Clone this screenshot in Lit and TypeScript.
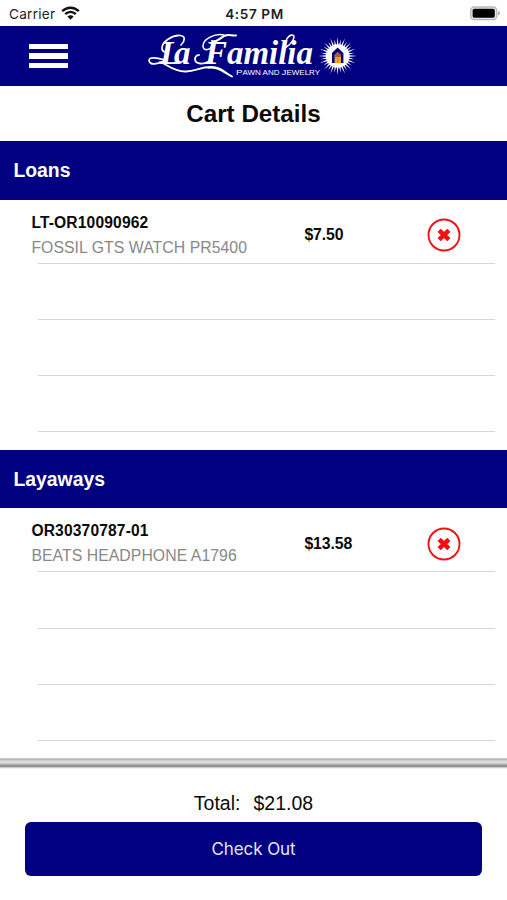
import { LitElement, html, css, svg } from "lit";
import { customElement, property } from "lit/decorators.js";

interface CartItem {
  ticket: string;
  description: string;
  price: string;
}

const rays = Array.from({ length: 32 }, (_, i) => {
  const a = (i * Math.PI) / 16;
  const r = i % 2 ? 17 : 19.2;
  const w = 0.09;
  const pt = (rad: number, ang: number) =>
    `${(189.6 + rad * Math.cos(ang)).toFixed(2)} ${(30 + rad * Math.sin(ang)).toFixed(2)}`;
  return `M${pt(10, a - w)}L${pt(r, a)}L${pt(10, a + w)}Z`;
}).join("");

@customElement("brand-logo")
export class BrandLogo extends LitElement {
  static styles = css`
    :host { display: block; width: 214px; height: 60px; }
    svg { display: block; }
    .script { font: italic bold 33px "Liberation Serif", serif; fill: #fff; }
    .tag { font: 6.5px "Liberation Sans", sans-serif; fill: #fff; }
    .tag-cap { font-size: 8px; }
    .swash { fill: none; stroke: #fff; stroke-linecap: round; stroke-linejoin: round; }
  `;
  render() {
    return html`<svg width="214" height="60" viewBox="0 0 214 60">
      ${svg`
        <text class="script" x="12 26" y="37.5">La</text>
        <text class="script" x="57" y="37.5" textLength="108" lengthAdjust="spacingAndGlyphs">Familia</text>
        <path class="swash" stroke-width="1.7" d="M33 19C37 15 38 10 32 9.5C24 9 14 16 14 22C14 27 19 27 21 23.5"/>
        <path class="swash" stroke-width="1.7" d="M17 34C11 32 1 30 1 34.5C2 40 10 38 16 35"/>
        <path class="swash" stroke-width="1.8" d="M12 36C19 38 25 46 38 45.5C48 45 52 41 63 41C73 41 76 46 84 50.5"/>
        <path class="swash" stroke-width="1.3" d="M60 42C71 41 76 47 84 50.5"/>
        <path class="swash" stroke-width="2" d="M64 15C71 17 73 9 80 9C83 9 85 10 88 9.5"/>
        <path class="swash" stroke-width="1.6" d="M76 9C67 7 55 13 55 20C55 26 64 24 64 18.5"/>
        <path class="swash" stroke-width="1.8" d="M51 29C46 29 45 37 52 37.5C58 38 62 36 65 31"/>
        <path class="swash" stroke-width="1.5" d="M137 22C144 18 149 9 144 9C140 9 137 15 136 22"/>
        <text class="tag" x="88" y="49" textLength="84" lengthAdjust="spacingAndGlyphs"><tspan class="tag-cap">P</tspan>AWN AND <tspan class="tag-cap">J</tspan>EWELRY</text>
        <path fill="#fff" d=${rays}/>
        <circle cx="189.6" cy="30" r="11.8" fill="#fff"/>
        <path fill="#00007a" d="M184 37V27L189.6 21.5L195.4 27V37Z"/>
        <path fill="#f3a12c" d="M186.6 37.2V29L189.6 26L193 29V37.2Z"/>
        <path fill="#a65a37" d="M186.6 31V29L189.6 26L193 29V31Z"/>
        <path stroke="#bd6a2c" stroke-width=".6" d="M189.8 27V36"/>
      `}
    </svg>`;
  }
}

@customElement("cart-section")
export class CartSection extends LitElement {
  @property() heading = "";
  @property({ attribute: false }) items: CartItem[] = [];

  static styles = css`
    :host { display: block; height: 308.8px; font-family: "Liberation Sans", Arial, sans-serif; }
    .heading {
      box-sizing: border-box; height: 58.7px; padding: 0 13.4px;
      display: flex; align-items: center;
      background: #000080; color: #fff; font-size: 19.4px; font-weight: bold;
    }
    .rows { display: flex; flex-direction: column; }
    .row {
      box-sizing: border-box; height: 56.2px; margin-left: 38px; margin-right: 12px;
      border-bottom: 1.6px solid #d6d6d6;
    }
    .item { height: 64px; display: flex; align-items: center; }
    .info { width: 273px; margin-left: -6.6px; padding-top: 7px; }
    .ticket { font-size: 15.6px; font-weight: bold; line-height: 25px; color: #0a0a0a; letter-spacing: .15px; }
    .desc { font-size: 15.8px; line-height: 25px; color: #888; letter-spacing: .05px; }
    .price { width: 122.6px; padding-top: 8px; font-size: 15.8px; font-weight: bold; color: #0a0a0a; letter-spacing: -.1px; }
    .remove { padding: 7.5px 0 0; border: 0; background: none; }
    .remove svg { display: block; }
  `;
  render() {
    return html`
      <div class="heading">${this.heading}</div>
      <div class="rows">
        ${this.items.map((it) => html`
          <div class="row item">
            <div class="info">
              <div class="ticket">${it.ticket}</div>
              <div class="desc">${it.description}</div>
            </div>
            <div class="price">${it.price}</div>
            <button class="remove" aria-label="Remove">
              <svg width="34" height="34" viewBox="0 0 34 34">
                <circle cx="17" cy="17" r="15.5" fill="none" stroke="#f40f12" stroke-width="1.9"/>
                <path d="M12.1 12.3L21.9 21.7M21.9 12.3L12.1 21.7" stroke="#f40f12" stroke-width="4.6"/>
              </svg>
            </button>
          </div>`)}
        ${[0, 1, 2].map(() => html`<div class="row"></div>`)}
      </div>
    `;
  }
}

@customElement("app-root")
export class AppRoot extends LitElement {
  static styles = css`
    :host {
      display: flex; flex-direction: column; width: 507px; height: 900px; overflow: hidden;
      background: #fff; color: #0a0a0a; font-family: "Liberation Sans", Arial, sans-serif;
    }
    .status {
      flex: none; height: 25.5px; box-sizing: border-box; padding: 2px 7px 0 9px;
      display: grid; grid-template-columns: 1fr auto 1fr; align-items: center;
      font-family: Inter, sans-serif; font-size: 13.6px; color: #222;
    }
    .carrier { display: flex; align-items: center; gap: 5.5px; letter-spacing: .25px; }
    .time { font-weight: 600; letter-spacing: .6px; }
    .battery { justify-self: end; }
    .status svg { display: block; }
    .nav {
      flex: none; height: 60.7px; box-sizing: border-box; background: #000080;
      display: flex; align-items: flex-start; padding-left: 29px;
    }
    .menu { display: flex; flex-direction: column; gap: 4px; padding: 0; border: 0; background: none; margin: 18.5px 80px 0 0; }
    .bar { width: 39px; height: 5.3px; background: #fff; }
    .title {
      flex: none; height: 54.8px; margin: 0; display: flex; align-items: center; justify-content: center;
      font-size: 24.2px; font-weight: bold;
    }
    .list { flex: none; height: 617.5px; overflow: hidden; }
    .edge {
      flex: none; height: 11px;
      background: linear-gradient(#e0e0e0 0, #b3b3b3 1px, #b8b8b8 2px, #dedede 3px, #dadada 5px, #bbb 6px, #959595 7.5px, #959595 8.5px, #ccc 9.5px, #fff 11px);
    }
    .footer { flex: 1; display: flex; flex-direction: column; align-items: center; }
    .total { display: flex; gap: 13px; margin-top: 21.6px; height: 24px; line-height: 24px; font-size: 19.5px; }
    .checkout {
      margin-top: 6.8px; width: 457.5px; height: 54px; flex: none; border: 0; border-radius: 6px; padding: 0;
      background: #000080; color: #e4e4fa; font: 17px Inter, sans-serif; letter-spacing: -.1px;
    }
  `;

  private loans: CartItem[] = [{ ticket: "LT-OR10090962", description: "FOSSIL GTS WATCH PR5400", price: "$7.50" }];
  private layaways: CartItem[] = [{ ticket: "OR30370787-01", description: "BEATS HEADPHONE A1796", price: "$13.58" }];

  render() {
    return html`
      <div class="status">
        <div class="carrier">
          <span>Carrier</span>
          <svg width="19" height="15" viewBox="0 0 19 15">
            <g fill="none" stroke="#111" stroke-width="2.5">
              <path d="M1.2 5.2C6 .5 13 .5 17.8 5.2"/>
              <path d="M4.2 8.2C7.3 5.2 11.7 5.2 14.8 8.2"/>
            </g>
            <path fill="#111" d="M6.4 10.5C8.2 8.8 10.8 8.8 12.6 10.5L9.5 13.7Z"/>
          </svg>
        </div>
        <div class="time">4:57 PM</div>
        <svg class="battery" width="31" height="15" viewBox="0 0 31 15">
          <rect x="1.7" y="1" width="26" height="12.6" rx="3.6" fill="#e8e8e8" stroke="#b8b8b8" stroke-width="1.3"/>
          <rect x="3.6" y="2.8" width="22.2" height="9" rx="1.8" fill="#000"/>
          <path d="M29 5Q31 5.8 31 7.3Q31 8.8 29 9.6Z" fill="#aaa"/>
        </svg>
      </div>
      <div class="nav">
        <button class="menu" aria-label="Menu">
          <div class="bar"></div><div class="bar"></div><div class="bar"></div>
        </button>
        <brand-logo></brand-logo>
      </div>
      <h1 class="title">Cart Details</h1>
      <div class="list">
        <cart-section heading="Loans" .items=${this.loans}></cart-section>
        <cart-section heading="Layaways" .items=${this.layaways}></cart-section>
      </div>
      <div class="edge"></div>
      <div class="footer">
        <div class="total"><span>Total:</span><span>$21.08</span></div>
        <button class="checkout">Check Out</button>
      </div>
    `;
  }
}
